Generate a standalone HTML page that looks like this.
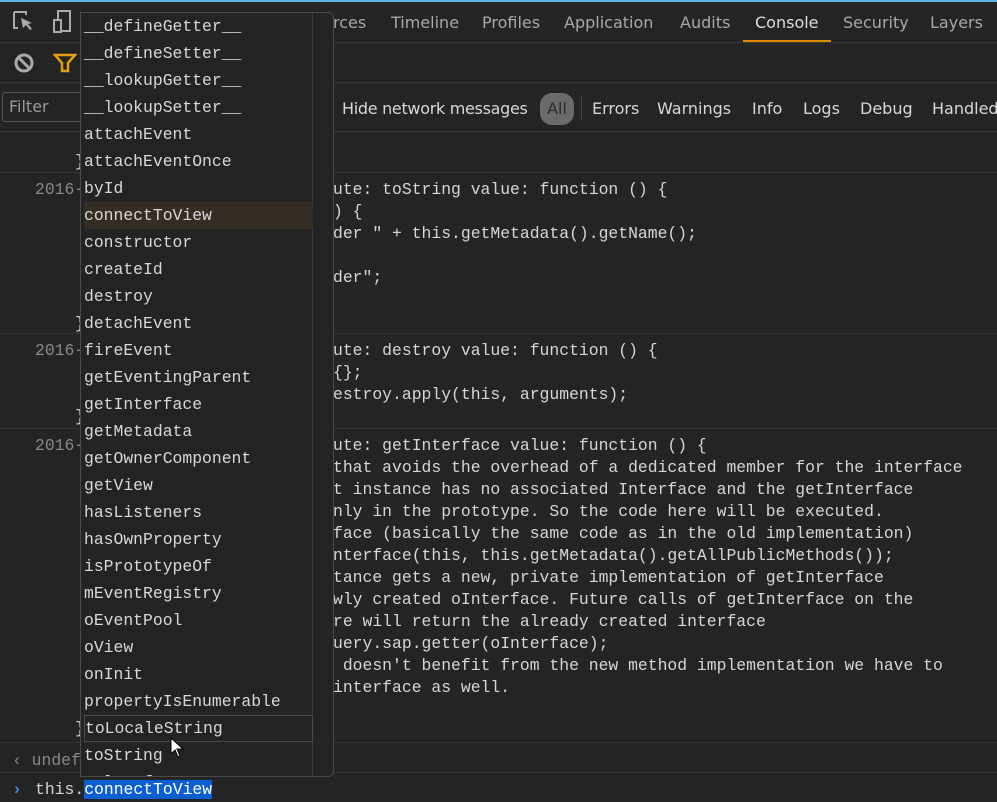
<!DOCTYPE html>
<html><head><style>
*{margin:0;padding:0;box-sizing:border-box}
body{width:997px;height:802px;background:#242424;overflow:hidden;position:relative;font-family:"DejaVu Sans","Liberation Sans",sans-serif;color:#ccc}
.a{position:absolute;white-space:pre}
.m{font-family:"Liberation Mono","DejaVu Sans Mono",monospace;font-size:16.4px;line-height:22px;color:#d6d6d6}
.hl{position:absolute;left:0;width:997px;height:1px;background:#383838}
.tab{position:absolute;top:13px;font-size:16px;color:#a8a8a8}
.f{position:absolute;top:99px;font-size:16px;color:#d8d8d8}
.dd{position:absolute;left:80px;top:12px;width:254px;height:765px;background:#232323;border:1px solid #4a4a4a;border-radius:0 6px 6px 0;overflow:hidden}
.it{position:absolute;left:3px;width:229px;height:27px;font-family:"Liberation Mono","DejaVu Sans Mono",monospace;font-size:16.4px;line-height:28px;color:#d8d8d8}
</style></head><body>
<div class="a" style="left:0;top:0;width:997px;height:2px;background:#5bb3e8"></div>
<div class="hl" style="top:42px"></div>
<div class="hl" style="top:82px"></div>
<div class="hl" style="top:131px"></div>
<svg class="a" style="left:12px;top:10px" width="24" height="24" viewBox="0 0 24 24"><path d="M2 2h12v3M2 2v16h4" fill="none" stroke="#aaa" stroke-width="2"/><path d="M9 8l11 5-4 1 4 5-2 1-4-5-3 3z" fill="#aaa"/></svg>
<svg class="a" style="left:52px;top:9px" width="26" height="26" viewBox="0 0 26 26"><rect x="6" y="2" width="12" height="20" fill="none" stroke="#aaa" stroke-width="2"/><rect x="2" y="11" width="7" height="12" fill="#242424" stroke="#aaa" stroke-width="2"/></svg>
<svg class="a" style="left:13px;top:52px" width="22" height="22" viewBox="0 0 22 22"><circle cx="11" cy="11" r="8" fill="none" stroke="#aaa" stroke-width="3"/><path d="M5 5l12 12" stroke="#aaa" stroke-width="3"/></svg>
<svg class="a" style="left:53px;top:52px" width="24" height="22" viewBox="0 0 24 22"><path d="M2 3h20l-7 8v8h-6v-8z" fill="none" stroke="#e5a00d" stroke-width="2.5"/></svg>
<div class="tab" style="left:333px">rces</div>
<div class="tab" style="left:391px">Timeline</div>
<div class="tab" style="left:482px">Profiles</div>
<div class="tab" style="left:564px">Application</div>
<div class="tab" style="left:680px">Audits</div>
<div class="tab" style="left:755px;color:#ddd">Console</div>
<div class="a" style="left:743px;top:40px;width:88px;height:2px;background:#e08a00"></div>
<div class="tab" style="left:843px">Security</div>
<div class="tab" style="left:930px">Layers</div>
<div class="a" style="left:2px;top:92px;width:90px;height:30px;border:1px solid #555;border-radius:3px;font-size:16px;color:#999;padding:4px 6px">Filter</div>
<div class="f" style="left:342px;letter-spacing:-0.3px">Hide network messages</div>
<div class="a" style="left:540px;top:93px;width:34px;height:32px;border-radius:12px;background:#6a6a6a;font-size:16px;color:#2a2a2a;text-align:center;line-height:32px">All</div>
<div class="a" style="left:581px;top:96px;width:1px;height:24px;background:#444"></div>
<div class="f" style="left:592px">Errors</div>
<div class="f" style="left:657px">Warnings</div>
<div class="f" style="left:752px">Info</div>
<div class="f" style="left:803px">Logs</div>
<div class="f" style="left:860px">Debug</div>
<div class="f" style="left:932px">Handled</div>
<div class="hl" style="top:172px;background:#333"></div>
<div class="hl" style="top:333px;background:#333"></div>
<div class="hl" style="top:428px;background:#333"></div>
<div class="hl" style="top:742px;background:#333"></div>
<div class="hl" style="top:772px;background:#333"></div>
<div class="a m" style="left:75px;top:151px">}</div>
<div class="a m" style="left:35px;top:179px;color:#8a8a8a">2016-</div>
<div class="a m" style="left:75px;top:313px">}</div>
<div class="a m" style="left:35px;top:340px;color:#8a8a8a">2016-</div>
<div class="a m" style="left:75px;top:406px">}</div>
<div class="a m" style="left:35px;top:435px;color:#8a8a8a">2016-</div>
<div class="a m" style="left:75px;top:718px">}</div>
<div class="a m" style="left:333px;top:179px">ute: toString value: function () {
) {
der " + this.getMetadata().getName();

der";</div>
<div class="a m" style="left:333px;top:340px">ute: destroy value: function () {
{};
estroy.apply(this, arguments);</div>
<div class="a m" style="left:333px;top:435px">ute: getInterface value: function () {
that avoids the overhead of a dedicated member for the interface
t instance has no associated Interface and the getInterface
nly in the prototype. So the code here will be executed.
face (basically the same code as in the old implementation)
nterface(this, this.getMetadata().getAllPublicMethods());
tance gets a new, private implementation of getInterface
wly created oInterface. Future calls of getInterface on the
re will return the already created interface
uery.sap.getter(oInterface);
 doesn't benefit from the new method implementation we have to
interface as well.</div>
<div class="a m" style="left:12px;top:750px;color:#888">&lsaquo; undef</div>
<div class="a m" style="left:12px;top:779px;color:#3b8beb;font-weight:bold">&rsaquo;</div>
<div class="a m" style="left:35px;top:779px">this.<span style="background:#0b5fd1;color:#fff">connectToView</span></div>
<div class="dd">
<div class="a" style="left:231px;top:0;width:1px;height:765px;background:#3a3a3a"></div>
<div class="it" style="top:0">__defineGetter__</div>
<div class="it" style="top:27px">__defineSetter__</div>
<div class="it" style="top:54px">__lookupGetter__</div>
<div class="it" style="top:81px">__lookupSetter__</div>
<div class="it" style="top:108px">attachEvent</div>
<div class="it" style="top:135px">attachEventOnce</div>
<div class="it" style="top:162px">byId</div>
<div class="it" style="top:189px;background:#352d24">connectToView</div>
<div class="it" style="top:216px">constructor</div>
<div class="it" style="top:243px">createId</div>
<div class="it" style="top:270px">destroy</div>
<div class="it" style="top:297px">detachEvent</div>
<div class="it" style="top:324px">fireEvent</div>
<div class="it" style="top:351px">getEventingParent</div>
<div class="it" style="top:378px">getInterface</div>
<div class="it" style="top:405px">getMetadata</div>
<div class="it" style="top:432px">getOwnerComponent</div>
<div class="it" style="top:459px">getView</div>
<div class="it" style="top:486px">hasListeners</div>
<div class="it" style="top:513px">hasOwnProperty</div>
<div class="it" style="top:540px">isPrototypeOf</div>
<div class="it" style="top:567px">mEventRegistry</div>
<div class="it" style="top:594px">oEventPool</div>
<div class="it" style="top:621px">oView</div>
<div class="it" style="top:648px">onInit</div>
<div class="it" style="top:675px">propertyIsEnumerable</div>
<div class="it" style="top:702px;border:1px solid #4a4a4a;line-height:26px">toLocaleString</div>
<div class="it" style="top:729px">toString</div>
<div class="it" style="top:756px">valueOf</div>
</div>
<svg class="a" style="left:170px;top:737px" width="14" height="22" viewBox="0 0 14 22"><path d="M1 1v16l4-4 3 7 2-1-3-7h6z" fill="#fff" stroke="#000" stroke-width="1"/></svg>
</body></html>
